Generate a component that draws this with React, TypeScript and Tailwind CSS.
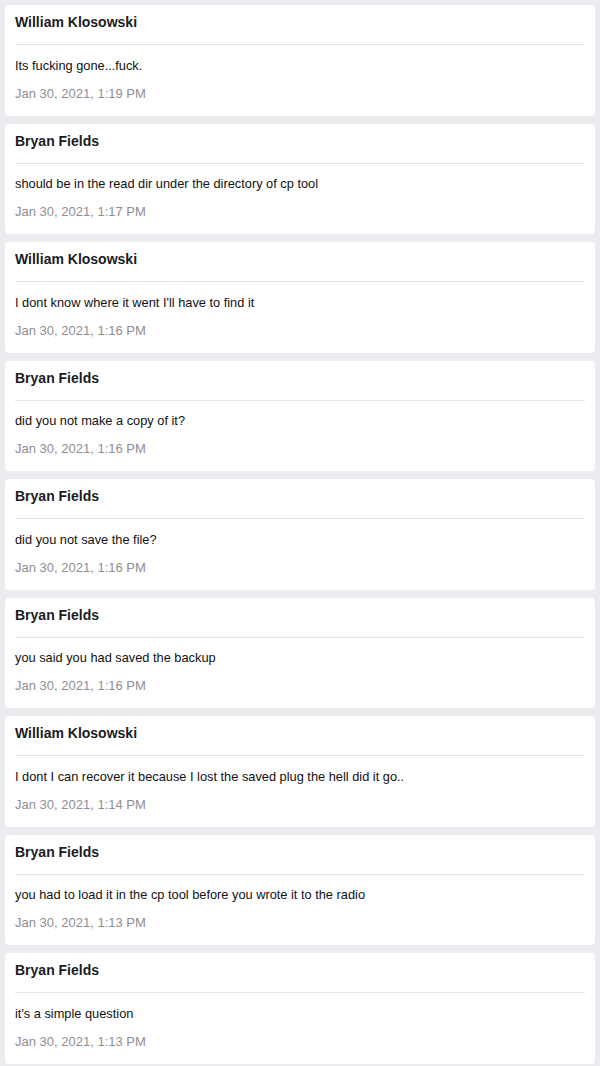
const messages = [
  { name: 'William Klosowski', text: 'Its fucking gone...fuck.', time: 'Jan 30, 2021, 1:19 PM' },
  { name: 'Bryan Fields', text: 'should be in the read dir under the directory of cp tool', time: 'Jan 30, 2021, 1:17 PM' },
  { name: 'William Klosowski', text: "I dont know where it went I'll have to find it", time: 'Jan 30, 2021, 1:16 PM' },
  { name: 'Bryan Fields', text: 'did you not make a copy of it?', time: 'Jan 30, 2021, 1:16 PM' },
  { name: 'Bryan Fields', text: 'did you not save the file?', time: 'Jan 30, 2021, 1:16 PM' },
  { name: 'Bryan Fields', text: 'you said you had saved the backup', time: 'Jan 30, 2021, 1:16 PM' },
  { name: 'William Klosowski', text: 'I dont I can recover it because I lost the saved plug the hell did it go..', time: 'Jan 30, 2021, 1:14 PM' },
  { name: 'Bryan Fields', text: 'you had to load it in the cp tool before you wrote it to the radio', time: 'Jan 30, 2021, 1:13 PM' },
  { name: 'Bryan Fields', text: "it's a simple question", time: 'Jan 30, 2021, 1:13 PM' },
];

export default function App() {
  return (
    <div className="min-h-[1066px] bg-[#ebebf0] p-[5px] font-['Liberation_Sans',Arial,sans-serif]">
      <div className="flex flex-col gap-[8px]">
        {messages.map((m, i) => (
          <div key={i} className="rounded-[4px] bg-white px-[10px] pt-[7px] pb-[12px]">
            <div className="text-[14px] font-bold leading-[20px] text-[#1c1c1e]">{m.name}</div>
            <div className="mt-[12px] h-px bg-[#e3e3e8]" />
            <div className="mt-[10.5px] text-[12.8px] leading-[20px] text-[#111113]">{m.text}</div>
            <div className="mt-[8px] text-[13px] leading-[20px] text-[#8e8e93]">{m.time}</div>
          </div>
        ))}
      </div>
    </div>
  );
}
